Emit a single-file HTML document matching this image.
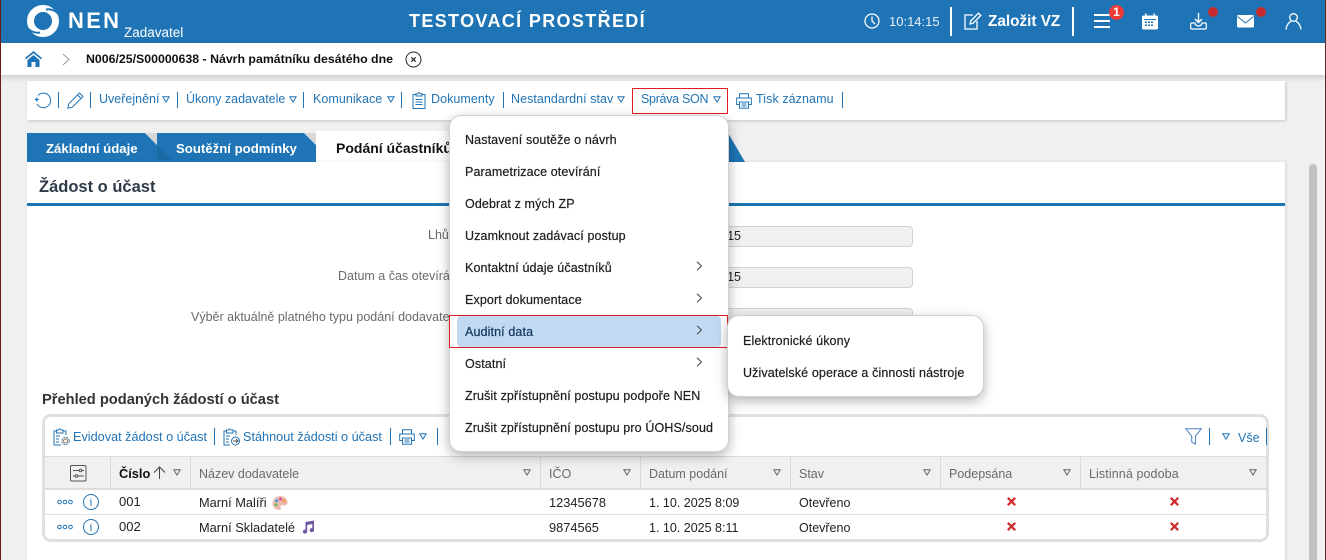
<!DOCTYPE html>
<html lang="cs"><head><meta charset="utf-8"><title>NEN</title>
<style>
*{box-sizing:border-box}
html,body{margin:0;padding:0;width:1326px;height:560px;overflow:hidden;background:#f0f0f0;font-family:"Liberation Sans",sans-serif}
#p{position:relative;width:1326px;height:560px;overflow:hidden;background:#f0f0f0}
.a{position:absolute}
.t{position:absolute;white-space:nowrap;line-height:20px;height:20px;font-size:12.5px}
.l{color:#2274b5}
.h{color:#6a6a6a}
.d{color:#222}
.m{color:#1d1d1d;font-size:12.5px;letter-spacing:.12px;-webkit-text-stroke:.2px #1d1d1d}
.b{font-weight:bold}
.w{color:#fff}
.dv{position:absolute;width:1px;background:#2274b5}
.s{position:absolute;overflow:visible}
.cs{position:absolute;top:457px;width:1px;height:33px;background:#d9d9d9}
</style></head><body><div id="p">
<div class="a" style="left:0;top:0;width:1326px;height:43px;background:#1e74b4"></div>
<div class="a" style="left:0;top:43px;width:1326px;height:32px;background:#fff;box-shadow:0 2px 6px rgba(0,0,0,.18)"></div>

<svg class="s" style="left:26px;top:4px" width="34" height="34" viewBox="0 0 34 34" fill="none"><circle cx="17" cy="17" r="12.500" stroke="#fff" stroke-width="7"/><path d="M34 12C30 6 24 4.500 20 5.500" stroke="#1e74b4" stroke-width="2"/><path d="M0 22C4 28 10 29.500 14 28.500" stroke="#1e74b4" stroke-width="2"/></svg>
<div class="t w b" style="left:68px;top:11px;font-size:22px;letter-spacing:2.300px">NEN</div>
<div class="t w" style="left:124px;top:23px;font-size:13.500px">Zadavatel</div>
<div class="t w b" style="left:409px;top:11px;font-size:18px;letter-spacing:1.350px">TESTOVACÍ PROSTŘEDÍ</div>

<svg class="s" style="left:864px;top:13px" width="16" height="16" viewBox="0 0 16 16" fill="none" stroke="#fff" stroke-width="1.300"><circle cx="8" cy="8" r="7"/><path d="M8 3.500V8l3 3"/></svg>
<div class="t" style="left:889px;top:12px;font-size:13px;color:#e8f1f8">10:14:15</div>
<div class="a" style="left:950px;top:7px;width:2px;height:29px;background:#fff"></div>
<svg class="s" style="left:964px;top:12px" width="18" height="18" viewBox="0 0 18 18" fill="none" stroke="#fff" stroke-width="1.300"><path d="M9 3H1v14h12V9"/><path d="M6 12l.7-3L14.500 1.200l2.300 2.300L9 11.300Z"/></svg>
<div class="t w b" style="left:988px;top:12px;font-size:15.300px">Založit VZ</div>
<div class="a" style="left:1072px;top:7px;width:2px;height:29px;background:#fff"></div>
<svg class="s" style="left:1094px;top:14px" width="17" height="15" viewBox="0 0 17 15" fill="#fff"><rect width="16" height="2" y="0"/><rect width="16" height="2" y="6"/><rect width="16" height="2" y="12"/></svg>
<div class="a" style="left:1109px;top:5px;width:15px;height:15px;border-radius:50%;background:#ee3b36;color:#fff;font-size:12px;font-weight:bold;line-height:14px;text-align:center">1</div>
<svg class="s" style="left:1141px;top:13px" width="18" height="17" viewBox="0 0 18 17"><rect x="1" y="2.500" width="16" height="14" rx="1.500" fill="#fff"/><rect x="4" y="0.500" width="1.500" height="4" fill="#fff"/><rect x="12.500" y="0.500" width="1.500" height="4" fill="#fff"/><g fill="#1e74b4"><rect x="3" y="6" width="12" height="1"/><rect x="4" y="8.500" width="2" height="1.500"/><rect x="7" y="8.500" width="2" height="1.500"/><rect x="10" y="8.500" width="2" height="1.500"/><rect x="4" y="11.500" width="2" height="1.500"/><rect x="7" y="11.500" width="2" height="1.500"/><rect x="10" y="11.500" width="2" height="1.500"/></g></svg>
<svg class="s" style="left:1190px;top:13px" width="17" height="17" viewBox="0 0 17 17" fill="none" stroke="#fff" stroke-width="1.400"><path d="M8.500 0v9M5 6l3.500 3.500L12 6"/><path d="M5 10H1.500A1 1 0 0 0 .7 11v4a1 1 0 0 0 1 1h13.600a1 1 0 0 0 1-1v-4a1 1 0 0 0-1-1H12a3.500 3 0 0 1-7 0Z" stroke-width="1.200"/></svg>
<div class="a" style="left:1208px;top:7px;width:10px;height:10px;border-radius:50%;background:#c62a2a"></div>
<svg class="s" style="left:1237px;top:15px" width="17" height="13" viewBox="0 0 17 13"><rect width="17" height="12.500" rx="1.500" fill="#fff"/><path d="M.5 1.500L8.500 8 16.500 1.500" fill="none" stroke="#1e74b4" stroke-width="1"/></svg>
<div class="a" style="left:1256px;top:7px;width:10px;height:10px;border-radius:50%;background:#c62a2a"></div>
<svg class="s" style="left:1285px;top:13px" width="17" height="17" viewBox="0 0 17 17" fill="none" stroke="#fff" stroke-width="1.300"><circle cx="8.500" cy="4.500" r="3.800"/><path d="M1 16.500c.5-4.500 3-7.500 5-8M16 16.500c-.5-4.500-3-7.500-5-8"/></svg>

<svg class="s" style="left:25px;top:51px" width="17" height="16" viewBox="0 0 17 16"><path d="M8.500 0L0 7l1 1.300 7.500-6 7.500 6L17 7Z" fill="#1e74b4"/><path d="M2.500 9L8.500 4l6 5v7h-4v-5h-4v5h-4Z" fill="#1e74b4"/></svg>
<svg class="s" style="left:62px;top:53px" width="8" height="13" viewBox="0 0 8 13" fill="none" stroke="#9a9a9a" stroke-width="1"><path d="M1 1l6 5.500L1 12"/></svg>
<div class="t b" style="left:86px;top:49px;font-size:12.340px;color:#111">N006/25/S00000638 - Návrh památníku desátého dne</div>
<svg class="s" style="left:405px;top:51px" width="17" height="17" viewBox="0 0 17 17" fill="none" stroke="#222" stroke-width="1"><circle cx="8.500" cy="8.500" r="7.500"/><path d="M6.300 6.300l4.400 4.400M10.700 6.300l-4.400 4.400" stroke-width="1.200"/></svg>

<div class="a" style="left:27px;top:81px;width:1258px;height:39px;background:#fff;box-shadow:1px 1px 3px rgba(0,0,0,.18)"></div>
<svg class="s" style="left:35px;top:92px" width="17" height="17" viewBox="0 0 17 17" fill="none" stroke="#2274b5" stroke-width="1"><path d="M3 3.500A7.300 7.300 0 1 1 2 12M.5 7.500H4M2.200 5.500L.5 7.500 2.500 9.500"/></svg>
<div class="dv" style="left:58px;top:92px;height:16px"></div>
<svg class="s" style="left:67px;top:92px" width="17" height="17" viewBox="0 0 17 17" fill="none" stroke="#2274b5" stroke-width="1"><path d="M.8 16.200l1-4.500L12.500 1l3.500 3.500L5.300 15.200ZM10.500 3l3.500 3.500"/></svg>
<div class="dv" style="left:90px;top:92px;height:16px"></div>
<div class="t l" style="left:99px;top:89px">Uveřejnění</div>
<svg class="s tri" style="left:162px;top:96px" width="8" height="7" viewBox="0 0 8 7" fill="none" stroke="#2274b5"><path d="M.8.800h6.400L4 6Z"/></svg>
<div class="dv" style="left:177px;top:92px;height:16px"></div>
<div class="t l" style="left:186px;top:89px">Úkony zadavatele</div>
<svg class="s" style="left:289px;top:96px" width="8" height="7" viewBox="0 0 8 7" fill="none" stroke="#2274b5"><path d="M.8.800h6.400L4 6Z"/></svg>
<div class="dv" style="left:303px;top:92px;height:16px"></div>
<div class="t l" style="left:313px;top:89px;letter-spacing:.05px">Komunikace</div>
<svg class="s" style="left:387px;top:96px" width="8" height="7" viewBox="0 0 8 7" fill="none" stroke="#2274b5"><path d="M.8.800h6.400L4 6Z"/></svg>
<div class="dv" style="left:401px;top:92px;height:16px"></div>
<svg class="s" style="left:412px;top:92px" width="14" height="17" viewBox="0 0 14 17" fill="none" stroke="#2274b5" stroke-width="1"><path d="M4 2.500H1v14h12v-14h-3"/><path d="M4 4V1.800h2a1 1 0 0 1 2 0h2V4ZM3.500 7.500h7M3.500 10h7M3.500 12.500h7"/></svg>
<div class="t l" style="left:431px;top:89px;letter-spacing:.05px">Dokumenty</div>
<div class="dv" style="left:503px;top:92px;height:16px"></div>
<div class="t l" style="left:511px;top:89px;letter-spacing:.05px">Nestandardní stav</div>
<svg class="s" style="left:617px;top:96px" width="8" height="7" viewBox="0 0 8 7" fill="none" stroke="#2274b5"><path d="M.8.800h6.400L4 6Z"/></svg>
<div class="a" style="left:632px;top:88px;width:96px;height:26px;border:1px solid #e31b23"></div>
<div class="t l" style="left:641px;top:89px;letter-spacing:-.3px">Správa SON</div>
<svg class="s" style="left:713px;top:96px" width="8" height="7" viewBox="0 0 8 7" fill="none" stroke="#2274b5"><path d="M.8.800h6.400L4 6Z"/></svg>
<svg class="s" style="left:736px;top:93px" width="16" height="16" viewBox="0 0 16 16" fill="none" stroke="#2274b5" stroke-width="1"><path d="M3.500 5V.8h9V5M3.500 11.500H.7V5h14.600v6.500h-2.800"/><path d="M3.500 9h9v6.200h-9ZM5.500 11h5M5.500 13h5"/></svg>
<div class="t l" style="left:756px;top:89px;letter-spacing:.08px">Tisk záznamu</div>
<div class="dv" style="left:842px;top:92px;height:16px"></div>

<svg class="s" style="left:27px;top:130px" width="730" height="33" viewBox="0 0 730 33">
<path d="M0 3H118L130 15V3H277L289 15V32H0Z" fill="#1e74b4"/>
<path d="M118 3H130V15Z" fill="#d8d8d8"/><path d="M277 3H289V15Z" fill="#d8d8d8"/>
<path d="M130 15L147 32H133L130 29Z" fill="#1a6aa6"/>
<path d="M289 1V32H0V30H289Z" fill="#1e74b4"/>
<path d="M400 3H701L718 32H400Z" fill="#1e74b4"/>
</svg>
<div class="a" style="left:316px;top:131px;width:160px;height:31px;background:#fff"></div>
<div class="t w b" style="left:46px;top:139px;font-size:13.200px">Základní údaje</div>
<div class="t w b" style="left:176px;top:139px;font-size:13.200px">Soutěžní podmínky</div>
<div class="t b" style="left:336px;top:138px;font-size:14px;color:#111">Podání účastníků</div>

<div class="a" style="left:27px;top:162px;width:1258px;height:398px;background:#fff;box-shadow:1px 0 3px rgba(0,0,0,.12)"></div>
<div class="a" style="left:27px;top:160px;width:289px;height:2px;background:#1e74b4"></div>
<div class="t b" style="left:39px;top:177px;font-size:16.500px;color:#2e3a48">Žádost o účast</div>
<div class="a" style="left:27px;top:203px;width:1258px;height:3px;background:#1e74b4"></div>

<div class="t h" style="left:428px;top:225px">Lhůta</div>
<div class="t h" style="left:338px;top:266px">Datum a čas otevírání</div>
<div class="t h" style="left:191px;top:307px">Výběr aktuálně platného typu podání dodavatele</div>
<div class="a" style="left:560px;top:226px;width:353px;height:21px;background:#f0f0f0;border:1px solid #d2d2d2;border-radius:4px"></div>
<div class="a" style="left:560px;top:267px;width:353px;height:21px;background:#f0f0f0;border:1px solid #d2d2d2;border-radius:4px"></div>
<div class="a" style="left:560px;top:308px;width:353px;height:21px;background:#f0f0f0;border:1px solid #d2d2d2;border-radius:4px"></div>
<div class="t d" style="left:640px;width:101px;text-align:right;top:226px">1. 10. 2025 8:15</div>
<div class="t d" style="left:640px;width:101px;text-align:right;top:267px">1. 10. 2025 8:15</div>

<div class="t b" style="left:42px;top:390px;font-size:14.660px;color:#333">Přehled podaných žádostí o účast</div>

<div class="a" style="left:42px;top:414px;width:1227px;height:128px;border:3px solid #e0e0e0;border-radius:9px;background:#fff"></div>
<div class="a" style="left:45px;top:456px;width:1221px;height:34px;background:#f0f0f0;border-top:1px solid #dcdcdc;border-bottom:2px solid #dcdcdc"></div>
<div class="a" style="left:45px;top:514px;width:1221px;height:1px;background:#e0e0e0"></div>
<div class="cs" style="left:110px"></div><div class="cs" style="left:190px"></div><div class="cs" style="left:540px"></div><div class="cs" style="left:640px"></div><div class="cs" style="left:790px"></div><div class="cs" style="left:940px"></div><div class="cs" style="left:1080px"></div>

<svg class="s" style="left:53px;top:428px" width="17" height="18" viewBox="0 0 17 18" fill="none" stroke="#2274b5" stroke-width="1"><path d="M4 3H1v14h7M10 3h3v4"/><path d="M3.500 5V2h2a1.300 1.300 0 0 1 2.500 0h2v3ZM3 8h4M3 11h3M3 14h3"/><circle cx="12.500" cy="13" r="2" stroke="#a06a3a"/><circle cx="12.500" cy="13" r="3.700" stroke-dasharray="2 1"/></svg>
<div class="t l" style="left:73px;top:427px;font-size:12.700px">Evidovat žádost o účast</div>
<div class="dv" style="left:214px;top:428px;height:17px"></div>
<svg class="s" style="left:223px;top:428px" width="17" height="18" viewBox="0 0 17 18" fill="none" stroke="#2274b5" stroke-width="1"><path d="M4 3H1v14h6M10 3h3v4"/><path d="M3.500 5V2h2a1.300 1.300 0 0 1 2.500 0h2v3ZM3 8h4M3 11h3M3 14h3"/><circle cx="12.500" cy="13" r="4"/><path d="M10 13h5M13 11l2 2-2 2" stroke="#555"/></svg>
<div class="t l" style="left:243px;top:427px;font-size:12.700px">Stáhnout žádosti o účast</div>
<div class="dv" style="left:390px;top:428px;height:17px"></div>
<svg class="s" style="left:399px;top:429px" width="16" height="16" viewBox="0 0 16 16" fill="none" stroke="#2274b5" stroke-width="1"><path d="M3.500 5V.8h9V5M3.500 11.500H.7V5h14.600v6.500h-2.800"/><path d="M3.500 9h9v6.200h-9ZM5.500 11h5M5.500 13h5"/></svg>
<svg class="s" style="left:419px;top:433px" width="8" height="7" viewBox="0 0 8 7" fill="none" stroke="#2274b5"><path d="M.8.800h6.400L4 6Z"/></svg>
<div class="dv" style="left:437px;top:428px;height:17px"></div>
<svg class="s" style="left:1185px;top:428px" width="17" height="17" viewBox="0 0 17 17" fill="none" stroke="#4a80c0" stroke-width="1"><path d="M.7.800h15.600L10.500 8v8l-3.800-2V8Z"/></svg>
<div class="dv" style="left:1209px;top:428px;height:17px"></div>
<svg class="s" style="left:1222px;top:433px" width="8" height="7" viewBox="0 0 8 7" fill="none" stroke="#2274b5"><path d="M.8.800h6.400L4 6Z"/></svg>
<div class="t l" style="left:1238px;top:428px">Vše</div>
<div class="dv" style="left:1266px;top:428px;height:17px"></div>

<svg class="s" style="left:70px;top:465px" width="17" height="17" viewBox="0 0 17 17" fill="none" stroke="#555" stroke-width="1"><rect x=".5" y=".5" width="15.500" height="15.500" rx="1"/><path d="M3 5.500h6M12 5.500h2M3 11h2M8 11h6"/><circle cx="10.500" cy="5.500" r="1.300"/><circle cx="6.500" cy="11" r="1.300"/></svg>
<div class="t b" style="left:119px;top:464px;font-size:12.800px;color:#111">Číslo</div>
<svg class="s" style="left:153px;top:466px" width="13" height="13" viewBox="0 0 13 13" fill="none" stroke="#444" stroke-width="1"><path d="M6.500 13V1M1 6.500L6.500 1 12 6.500"/></svg>
<svg class="s" style="left:173px;top:469px" width="8" height="7" viewBox="0 0 8 7" fill="none" stroke="#666"><path d="M.8.800h6.400L4 6Z"/></svg>
<div class="t h" style="left:199px;top:464px">Název dodavatele</div>
<svg class="s" style="left:523px;top:469px" width="8" height="7" viewBox="0 0 8 7" fill="none" stroke="#666"><path d="M.8.800h6.400L4 6Z"/></svg>
<div class="t h" style="left:549px;top:464px">IČO</div>
<svg class="s" style="left:623px;top:469px" width="8" height="7" viewBox="0 0 8 7" fill="none" stroke="#666"><path d="M.8.800h6.400L4 6Z"/></svg>
<div class="t h" style="left:649px;top:464px">Datum podání</div>
<svg class="s" style="left:773px;top:469px" width="8" height="7" viewBox="0 0 8 7" fill="none" stroke="#666"><path d="M.8.800h6.400L4 6Z"/></svg>
<div class="t h" style="left:799px;top:464px">Stav</div>
<svg class="s" style="left:923px;top:469px" width="8" height="7" viewBox="0 0 8 7" fill="none" stroke="#666"><path d="M.8.800h6.400L4 6Z"/></svg>
<div class="t h" style="left:949px;top:464px">Podepsána</div>
<svg class="s" style="left:1063px;top:469px" width="8" height="7" viewBox="0 0 8 7" fill="none" stroke="#666"><path d="M.8.800h6.400L4 6Z"/></svg>
<div class="t h" style="left:1089px;top:464px;letter-spacing:.1px">Listinná podoba</div>
<svg class="s" style="left:1249px;top:469px" width="8" height="7" viewBox="0 0 8 7" fill="none" stroke="#666"><path d="M.8.800h6.400L4 6Z"/></svg>

<svg class="s" style="left:57px;top:494px" width="40" height="20" viewBox="0 0 40 20" fill="none" stroke="#2274b5"><circle cx="2.500" cy="8" r="1.800"/><circle cx="8" cy="8" r="1.800"/><circle cx="13.500" cy="8" r="1.800"/><circle cx="34" cy="8" r="7.500"/><path d="M34 6.500V12M33 6.500h1M34 4.500v.8"/></svg>
<svg class="s" style="left:57px;top:519px" width="40" height="20" viewBox="0 0 40 20" fill="none" stroke="#2274b5"><circle cx="2.500" cy="8" r="1.800"/><circle cx="8" cy="8" r="1.800"/><circle cx="13.500" cy="8" r="1.800"/><circle cx="34" cy="8" r="7.500"/><path d="M34 6.500V12M33 6.500h1M34 4.500v.8"/></svg>

<div class="t d" style="left:119px;top:492px;font-size:13px">001</div>
<div class="t d" style="left:199px;top:493px;font-size:12.800px">Marní Malíři</div>
<svg class="s" style="left:272px;top:495px" width="16" height="16" viewBox="0 0 14 14"><path d="M7 1C3 1 .5 4 .5 7.500S3.500 13 6.500 13c1.500 0 1.500-1.200 1-2-.5-1 .2-2 1.500-2h2.500c1.500 0 2-1 2-2.500C13.500 3 10.500 1 7 1Z" fill="#eab8ac"/><circle cx="4" cy="5" r="1.300" fill="#3fa2d8"/><circle cx="7.500" cy="3.500" r="1.300" fill="#d8509c"/><circle cx="3.500" cy="8.500" r="1.300" fill="#6cc05c"/><circle cx="10.500" cy="5" r="1.200" fill="#e89a2c"/></svg>
<div class="t d" style="left:119px;top:517px;font-size:13px">002</div>
<div class="t d" style="left:199px;top:518px;font-size:12.800px">Marní Skladatelé</div>
<svg class="s" style="left:301px;top:520px" width="14" height="14" viewBox="0 0 14 14"><path d="M4.500 2L13 .5v9.700a2.200 2 0 1 1-1.700-2V4L6.200 5v6.700a2.200 2 0 1 1-1.700-2Z" fill="#6f569e"/></svg>
<div class="t d" style="left:549px;top:493px;font-size:12.800px">12345678</div>
<div class="t d" style="left:549px;top:518px;font-size:12.800px">9874565</div>
<div class="t d" style="left:649px;top:493px">1. 10. 2025 8:09</div>
<div class="t d" style="left:649px;top:518px">1. 10. 2025 8:11</div>
<div class="t d" style="left:799px;top:493px">Otevřeno</div>
<div class="t d" style="left:799px;top:518px">Otevřeno</div>
<svg class="s" style="left:1007px;top:497px" width="9" height="9" viewBox="0 0 9 9" stroke="#cf2d2d" stroke-width="2.200"><path d="M.8.800l7.400 7.400M8.200.800L.8 8.200"/></svg>
<svg class="s" style="left:1170px;top:497px" width="9" height="9" viewBox="0 0 9 9" stroke="#cf2d2d" stroke-width="2.200"><path d="M.8.800l7.400 7.400M8.200.800L.8 8.200"/></svg>
<svg class="s" style="left:1007px;top:522px" width="9" height="9" viewBox="0 0 9 9" stroke="#cf2d2d" stroke-width="2.200"><path d="M.8.800l7.400 7.400M8.200.800L.8 8.200"/></svg>
<svg class="s" style="left:1170px;top:522px" width="9" height="9" viewBox="0 0 9 9" stroke="#cf2d2d" stroke-width="2.200"><path d="M.8.800l7.400 7.400M8.200.800L.8 8.200"/></svg>

<div class="a" style="left:449px;top:115px;width:280px;height:337px;background:#fff;border:1px solid #d0d0d0;border-radius:12px;box-shadow:0 4px 12px rgba(0,0,0,.3)"></div>
<div class="a" style="left:457px;top:316px;width:264px;height:31px;background:#c2d9f4;border-radius:4px"></div>
<div class="a" style="left:449px;top:315px;width:279px;height:33px;border:1px solid #e31b23;z-index:2"></div>
<div class="t m" style="left:465px;top:130px">Nastavení soutěže o návrh</div>
<div class="t m" style="left:465px;top:162px">Parametrizace otevírání</div>
<div class="t m" style="left:465px;top:194px">Odebrat z mých ZP</div>
<div class="t m" style="left:465px;top:226px">Uzamknout zadávací postup</div>
<div class="t m" style="left:465px;top:258px">Kontaktní údaje účastníků</div>
<div class="t m" style="left:465px;top:290px">Export dokumentace</div>
<div class="t m" style="left:465px;top:322px;color:#16365c;-webkit-text-stroke-color:#16365c">Auditní data</div>
<div class="t m" style="left:465px;top:354px">Ostatní</div>
<div class="t m" style="left:465px;top:386px">Zrušit zpřístupnění postupu podpoře NEN</div>
<div class="t m" style="left:465px;top:418px">Zrušit zpřístupnění postupu pro ÚOHS/soud</div>
<svg class="s" style="left:696px;top:261px" width="7" height="10" viewBox="0 0 7 10" fill="none" stroke="#444" stroke-width="1"><path d="M1 .8L5.500 5 1 9.200"/></svg>
<svg class="s" style="left:696px;top:293px" width="7" height="10" viewBox="0 0 7 10" fill="none" stroke="#444" stroke-width="1"><path d="M1 .8L5.500 5 1 9.200"/></svg>
<svg class="s" style="left:696px;top:325px" width="7" height="10" viewBox="0 0 7 10" fill="none" stroke="#444" stroke-width="1"><path d="M1 .8L5.500 5 1 9.200"/></svg>
<svg class="s" style="left:696px;top:357px" width="7" height="10" viewBox="0 0 7 10" fill="none" stroke="#444" stroke-width="1"><path d="M1 .8L5.500 5 1 9.200"/></svg>

<div class="a" style="left:727px;top:315px;width:257px;height:82px;background:#fff;border:1px solid #d0d0d0;border-radius:12px;box-shadow:0 4px 12px rgba(0,0,0,.3);z-index:3"></div>
<div class="t m" style="left:743px;top:331px;z-index:4">Elektronické úkony</div>
<div class="t m" style="left:743px;top:363px;z-index:4">Uživatelské operace a činnosti nástroje</div>

<div class="a" style="left:1309px;top:164px;width:8px;height:396px;background:#c1c1c1;border-radius:4px 4px 0 0"></div>
<div class="a" style="left:0;top:0;width:1px;height:560px;background:#6e1a12"></div>
<div class="a" style="left:1325px;top:0;width:1px;height:560px;background:#5e2a22"></div>
</div></body></html>
